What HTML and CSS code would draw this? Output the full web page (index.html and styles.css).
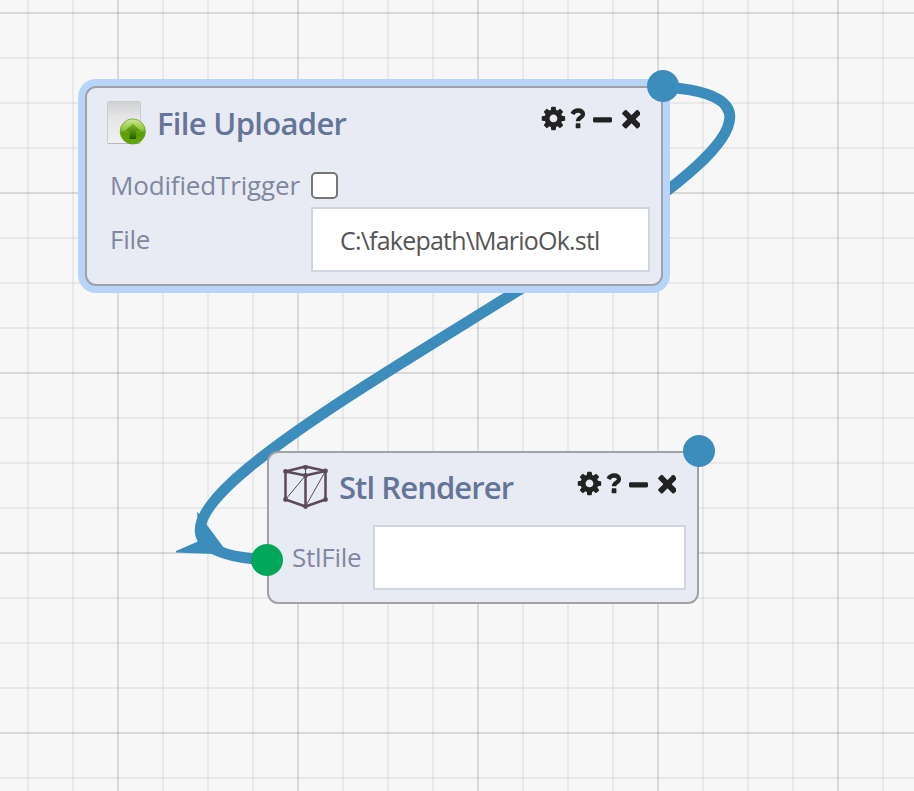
FILE: index.html
```
<!DOCTYPE html>
<html lang="en">
<head>
<meta charset="utf-8">
<title>Flow editor</title>
<link rel="stylesheet" href="styles.css">
</head>
<body>
<svg class="defs" width="0" height="0" aria-hidden="true">
  <symbol id="controls" viewBox="0 0 100 26">
    <path transform="translate(-.2 -1.2) scale(.01525)" d="M1152 896q0-106-75-181t-181-75-181 75-75 181 75 181 181 75 181-75 75-181zm512-109v222q0 12-8 23t-20 13l-185 28q-19 54-39 91 35 50 107 138 10 12 10 25t-9 23q-27 37-99 108t-94 71q-12 0-26-9l-138-108q-44 23-91 38-16 136-29 186-7 28-36 28h-222q-14 0-24.500-8.500t-11.500-21.500l-28-184q-49-16-90-37l-141 107q-10 9-25 9-14 0-25-11-126-114-165-168-7-10-7-23 0-12 8-23 15-21 51-66.500t54-70.500q-27-50-41-99l-183-27q-13-2-21-12.500t-8-23.500v-222q0-12 8-23t19-13l186-28q14-46 39-92-40-57-107-138-10-12-10-24 0-10 9-23 26-36 98.500-107.500t94.500-71.500q13 0 26 10l138 107q44-23 91-38 16-136 29-186 7-28 36-28h222q14 0 24.500 8.500t11.500 21.500l28 184q49 16 90 37l142-107q9-9 24-9 13 0 25 10 129 119 165 170 7 8 7 22 0 12-8 23-15 21-51 66.500t-54 70.500q26 50 41 98l183 28q13 2 21 12.500t8 23.500z"/>
    <path d="M32.400 8C34 5.100 36 4.500 38.100 4.500c3 0 4.900 1.500 4.900 3.700 0 3.400-5 3.300-5 7" fill="none" stroke="#222" stroke-width="4.300"/>
    <rect x="35.700" y="17.300" width="4.700" height="5" rx=".6"/>
    <rect x="53" y="11.200" width="19" height="5.200" rx="1.300"/>
    <g transform="translate(91.500 13.200) rotate(45)">
      <rect x="-11" y="-2.900" width="22" height="5.800" rx="1.200"/>
      <rect x="-2.900" y="-11" width="5.800" height="22" rx="1.200"/>
    </g>
  </symbol>
</svg>
<main class="canvas">
  <svg class="wires" width="914" height="791" viewBox="0 0 914 791">
    <path class="wire" d="M663 87C1001 107 -71 540 267 560"/>
    <path class="arrow" d="M224 548L197 511.500L199 541L176 551V552.500L214 554Z"/>
  </svg>

  <section class="node uploader selected">
    <header class="head">
      <svg class="icon" width="42" height="46" viewBox="0 0 42 46">
        <defs>
          <linearGradient id="sheet" x1="0" y1="0" x2="0" y2="1"><stop offset="0" stop-color="#cfd0d2"/><stop offset=".35" stop-color="#e5e5e6"/><stop offset="1" stop-color="#f0f0f2"/></linearGradient>
          <linearGradient id="ball" x1="0" y1="0" x2="0" y2="1"><stop offset="0" stop-color="#d3e996"/><stop offset=".42" stop-color="#8fc53a"/><stop offset=".55" stop-color="#5b9c07"/><stop offset="1" stop-color="#64aa08"/></linearGradient>
          <linearGradient id="up" x1="0" y1="0" x2="0" y2="1"><stop offset="0" stop-color="#80bd27"/><stop offset="1" stop-color="#245c00"/></linearGradient>
        </defs>
        <rect x="2.500" y="1.500" width="33" height="42" rx="1" fill="url(#sheet)" stroke="#cbccd2"/>
        <path d="M3 43.500h32" stroke="#b8b9be"/>
        <circle cx="27.800" cy="31.500" r="12.600" fill="url(#ball)" stroke="#5c9b18" stroke-width=".7"/>
        <path d="M27.800 23.500l7.800 7.500h-4.500v8h-6.600v-8h-4.500z" fill="url(#up)"/>
      </svg>
      <h2 class="title">File Uploader</h2>
      <svg class="controls"><use href="#controls"/></svg>
    </header>
    <div class="fields">
      <label class="label" for="mod">ModifiedTrigger</label>
      <input class="check" type="checkbox" id="mod">
      <span class="label file">File</span>
      <div class="box"><span class="value">C:\fakepath\MarioOk.stl</span></div>
    </div>
  </section>

  <section class="node renderer">
    <header class="head">
      <svg class="icon" width="48" height="46" viewBox="0 0 48 46">
        <g fill="none" stroke="#5a4a5c" stroke-linejoin="round">
          <path stroke-width="2.500" d="M4.500 6.500L24.500 1.500L44.500 6V34.500L24.500 41.500L4.500 34.500ZM4.500 6.500L24.500 10.500L44.500 6M24.500 10.500V41.500"/>
          <path stroke-width="1" d="M24.500 1.500V10.500M24.500 10.500L4.500 34.500M44.500 6L24.500 41.500"/>
        </g>
        <g fill="#5a4a5c"><circle cx="4.500" cy="6.500" r="2.400"/><circle cx="24.500" cy="2.400" r="2.400"/><circle cx="44.500" cy="6" r="2.400"/><circle cx="24.500" cy="10.500" r="2.400"/><circle cx="4.500" cy="34.500" r="2.400"/><circle cx="44.500" cy="34.500" r="2.400"/><circle cx="24.500" cy="41.500" r="2.400"/></g>
      </svg>
      <h2 class="title">Stl Renderer</h2>
      <svg class="controls"><use href="#controls"/></svg>
    </header>
    <div class="fields">
      <span class="label stl">StlFile</span>
      <div class="box"></div>
    </div>
  </section>

  <i class="port out-a"></i>
  <i class="port out-b"></i>
  <i class="port in-b"></i>
</main>
</body>
</html>
```
FILE: styles.css
```
* { box-sizing: border-box; }
body { margin: 0; }
.defs { position: absolute; }
.canvas {
  position: relative;
  width: 914px;
  height: 791px;
  overflow: hidden;
  font-family: "Open Sans", "Noto Sans", sans-serif;
  background-color: #f7f7f7;
  background-image:
    linear-gradient(90deg, rgba(0,0,0,.07) 2px, transparent 2px),
    linear-gradient(rgba(0,0,0,.07) 2px, transparent 2px),
    linear-gradient(90deg, rgba(0,0,0,.055) 2px, transparent 2px),
    linear-gradient(rgba(0,0,0,.055) 2px, transparent 2px);
  background-size: 180px 180px, 180px 180px, 45px 45px, 45px 45px;
  background-position: 117px 0, 0 12px, 27px 0, 0 12px;
}
.wires { position: absolute; left: 0; top: 0; }
.wire { fill: none; stroke: #3c8dbc; stroke-width: 11; }
.arrow { fill: #3c8dbc; }
.node {
  position: absolute;
  background: #e8ebf3;
  border: 2px solid #a1a2a8;
  border-radius: 11px;
}
.uploader { left: 85px; top: 86px; width: 578px; height: 200px; }
.renderer { left: 267px; top: 451px; width: 432px; height: 153px; }
.selected { box-shadow: 0 0 0 7px #b8d4f8; }
.head { display: flex; height: 72px; padding: 12px 21px 0 18px; }
.renderer .head { padding-left: 12px; }
.icon { flex: none; }
.title {
  margin: 0 auto 0 10px;
  font-size: 31px;
  font-weight: 600;
  line-height: 46px;
  letter-spacing: -.68px;
  color: #647597;
  white-space: nowrap;
}
.renderer .title { line-height: 45px; letter-spacing: -.92px; }
.controls { width: 100px; height: 26px; margin-top: 6px; fill: #222; flex: none; }
.fields {
  display: grid;
  grid-template-columns: 201px 339px;
  grid-template-rows: 47px 65px;
  padding-left: 23px;
  align-items: center;
}
.renderer .fields { grid-template-columns: 81px 313px; grid-template-rows: 65px; }
.label { padding-top: 2px; font-size: 26px; line-height: 36px; letter-spacing: -.16px; color: #8087a0; white-space: nowrap; }
.label.file, .label.stl { padding: 0 0 2px; letter-spacing: -.28px; }
.check {
  appearance: none;
  width: 27px;
  height: 27px;
  margin: 4px 0 0;
  border: 2px solid #767676;
  border-radius: 5px;
  background: #fff;
}
.box { height: 65px; border: 2px solid #d1d5df; background: #fff; padding-left: 27px; line-height: 63px; }
.value { font-size: 25px; letter-spacing: -.79px; color: #555; white-space: nowrap; }
.port { position: absolute; width: 32px; height: 32px; border-radius: 50%; background: #3c8dbc; }
.out-a { left: 647px; top: 70px; }
.out-b { left: 683px; top: 435px; }
.in-b { left: 251px; top: 544px; background: #00a65a; }
```
